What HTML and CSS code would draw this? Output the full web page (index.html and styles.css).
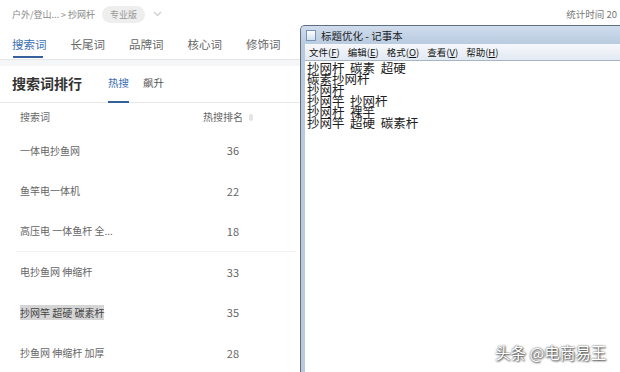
FILE: index.html
```html
<!DOCTYPE html>
<html lang="zh">
<head>
  <meta charset="UTF-8" />
  <title>搜索词排行</title>
  <link rel="stylesheet" href="styles.css">
</head>
<body>

  <div class="page">
    <div class="topbar">
      <div class="crumb">户外/登山... &gt; 抄网杆</div>
      <span class="pill">专业版</span>
      <span class="chev">
        <svg width="9" height="6" viewBox="0 0 9 6"><path d="M1 1 L4.5 4.5 L8 1" fill="none" stroke="#ccc" stroke-width="1.2"/></svg>
      </span>
      <div class="stat">统计时间 20</div>
    </div>

    <div class="tabs">
      <div class="tab active">搜索词</div>
      <div class="tab">长尾词</div>
      <div class="tab">品牌词</div>
      <div class="tab">核心词</div>
      <div class="tab">修饰词</div>
    </div>

    <div class="gap"></div>

    <div class="rank-head">
      <h2>搜索词排行</h2>
      <div class="subtab active">热搜</div>
      <div class="subtab">飙升</div>
    </div>

    <div class="table">
      <div class="row head">
        <span class="word">搜索词</span>
        <span class="num">热搜排名 <i class="sort"></i></span>
      </div>
      <div class="row"><span class="word">一体电抄鱼网</span><span class="num">36</span></div>
      <div class="row"><span class="word">鱼竿电一体机</span><span class="num">22</span></div>
      <div class="row split"><span class="word">高压电 一体鱼杆 全...</span><span class="num">18</span></div>
      <div class="row"><span class="word">电抄鱼网 伸缩杆</span><span class="num">33</span></div>
      <div class="row"><span class="word"><mark>抄网竿 超硬 碳素杆</mark></span><span class="num">35</span></div>
      <div class="row"><span class="word">抄鱼网 伸缩杆 加厚</span><span class="num">28</span></div>
    </div>
  </div>

  <div class="notepad">
    <div class="np-title">
      <span class="np-icon"></span>
      <span>标题优化 - 记事本</span>
    </div>
    <div class="np-menu">
      <span>文件(<u>F</u>)</span>
      <span>编辑(<u>E</u>)</span>
      <span>格式(<u>O</u>)</span>
      <span>查看(<u>V</u>)</span>
      <span>帮助(<u>H</u>)</span>
    </div>
    <div class="np-text">抄网杆  碳素  超硬
碳素抄网杆
抄网杆
抄网竿  抄网杆
抄网杆  裸竿
抄网竿  超硬  碳素杆</div>
  </div>

  <div class="mark-logo">头条 @电商易王</div>

</body>
</html>
```

FILE: styles.css
```css
* {
  box-sizing: border-box;
}

body {
  margin: 0;
  width: 620px;
  height: 372px;
  overflow: hidden;
  background: #fff;
  font-family: "Noto Sans CJK SC", "Noto Sans", sans-serif;
  color: #555;
  position: relative;
}

.page {
  width: 620px;
}

.topbar {
  height: 28px;
  display: flex;
  align-items: center;
  padding-left: 12px;
  font-size: 9px;
  color: #888;
}

.pill {
  margin-left: 7px;
  background: #eee;
  color: #999;
  border-radius: 9px;
  padding: 0 8px;
  height: 17px;
  line-height: 17px;
}

.chev {
  margin-left: 8px;
  display: flex;
}

.stat {
  margin-left: auto;
  margin-right: 3px;
  font-size: 9.5px;
  color: #777;
}

.tabs {
  display: flex;
  height: 32px;
  padding-left: 12px;
  border-bottom: 1px solid #e6e6e6;
  font-size: 11.5px;
}

.tab {
  width: 58.5px;
  padding-top: 8px;
  color: #666;
}

.tab.active {
  color: #3a6fb4;
  position: relative;
}

.tab.active::after {
  content: "";
  position: absolute;
  left: 1px;
  bottom: 1px;
  width: 30px;
  height: 2px;
  background: #35609a;
}

.gap {
  height: 6px;
  background: #f5f6f8;
}

.rank-head {
  display: flex;
  align-items: center;
  height: 37px;
  padding-left: 12px;
  border-bottom: 1px solid #e8e8e8;
}

.rank-head h2 {
  margin: 0 0 3px;
  font-size: 14px;
  font-weight: 600;
  color: #333;
  width: 96px;
}

.subtab {
  font-size: 10.5px;
  color: #555;
  height: 37px;
  line-height: 34px;
  margin-right: 14px;
}

.subtab.active {
  color: #3a6fb4;
  border-bottom: 2px solid #35609a;
}

.table {
  padding-left: 20px;
}

.row {
  display: flex;
  align-items: center;
  height: 40.5px;
  font-size: 10px;
  color: #666;
}

.row.head {
  height: 27px;
  color: #666;
}

.row.split {
  border-bottom: 1px solid #f0f0f0;
  margin-left: -4px;
  padding-left: 4px;
  width: 280px;
}

.word {
  width: 179px;
}

.num {
  width: 40px;
  text-align: right;
  font-size: 11px;
  color: #666;
  white-space: nowrap;
}

.head .num {
  width: 50px;
  margin-left: 4px;
  text-align: left;
  font-size: 10px;
}

.sort {
  display: inline-block;
  width: 4px;
  height: 7px;
  margin-left: 4px;
  background: #e4e4e4;
  border-radius: 2px;
}

mark {
  background: #d5d5d5;
  color: #444;
}

.notepad {
  position: absolute;
  left: 300px;
  top: 25px;
  width: 330px;
  height: 347px;
  background: #b9cade;
  border: 1px solid #5f6f80;
  border-right: none;
  border-bottom: none;
  border-radius: 5px 0 0 0;
  padding: 0 0 0 4px;
  overflow: hidden;
}

.np-title {
  height: 18px;
  display: flex;
  align-items: center;
  font-size: 10.5px;
  color: #222;
  background: linear-gradient(#cfdced, #b9cbe0);
  margin-left: -4px;
  padding-left: 5px;
}

.np-icon {
  width: 10px;
  height: 11px;
  margin-right: 5px;
  background: linear-gradient(#fff, #cfe1f0);
  border: 1px solid #7d94ae;
}

.np-menu {
  height: 17px;
  display: flex;
  align-items: center;
  gap: 8px;
  padding-left: 4px;
  font-size: 9.5px;
  color: #111;
  background: linear-gradient(#f6f8fb, #e2e9f3);
  border-bottom: 1px solid #a7b4c3;
}

.np-text {
  height: 320px;
  background: #fff;
  white-space: pre;
  font-family: "Noto Sans CJK SC", sans-serif;
  font-size: 12.5px;
  line-height: 11px;
  color: #222;
  padding: 1px 0 0 2px;
}

.mark-logo {
  position: absolute;
  left: 495px;
  top: 341px;
  font-size: 15.5px;
  color: #fff;
  text-shadow: 0 0 2px #333, 1px 1px 2px #555;
}
```
